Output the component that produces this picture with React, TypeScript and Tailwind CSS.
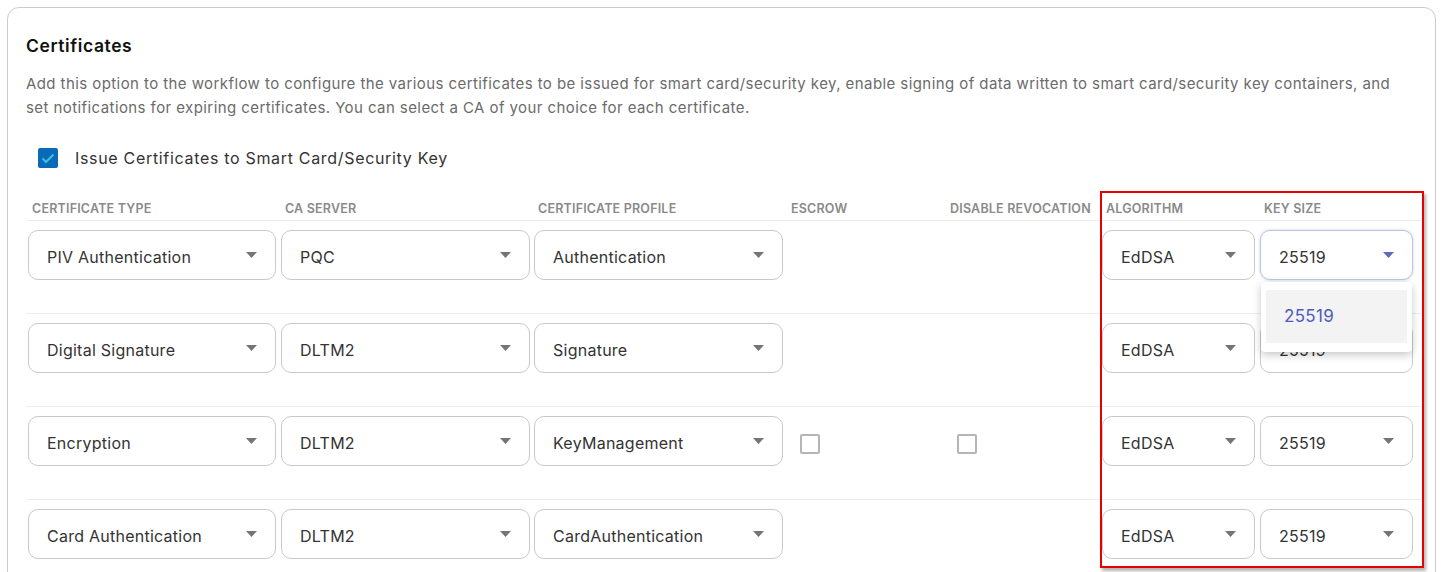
import React from 'react';

type Row = {
  type: string;
  server: string;
  profile: string;
  showChecks?: boolean;
};

const rows: Row[] = [
  { type: 'PIV Authentication', server: 'PQC', profile: 'Authentication' },
  { type: 'Digital Signature', server: 'DLTM2', profile: 'Signature' },
  { type: 'Encryption', server: 'DLTM2', profile: 'KeyManagement', showChecks: true },
  { type: 'Card Authentication', server: 'DLTM2', profile: 'CardAuthentication' },
];

const headers = [
  'Certificate Type',
  'CA Server',
  'Certificate Profile',
  'Escrow',
  'Disable Revocation',
  'Algorithm',
  'Key Size',
];

const gridCols = 'grid grid-cols-[253px_253px_253px_159px_156px_158px_165px]';

const Caret = ({ active }: { active?: boolean }) => (
  <svg width="11" height="6" viewBox="0 0 11 6" className="shrink-0">
    <path d="M0 0 L11 0 L5.5 6 Z" fill={active ? '#5c6bc0' : '#757575'} />
  </svg>
);

const Select = ({ value, width, active }: { value: string; width: string; active?: boolean }) => (
  <div
    className={`${width} h-[50px] rounded-[10px] border bg-white flex items-center justify-between pl-[18px] pr-[18px] ${
      active ? 'border-[#b9c7e6] shadow-[0_0_3px_rgba(92,107,192,0.35)]' : 'border-[#c9c9c9]'
    }`}
  >
    <span className="text-[16px] text-[#333] tracking-[0.25px] pt-[3px]">{value}</span>
    <Caret active={active} />
  </div>
);

const EmptyBox = () => <div className="w-[20px] h-[20px] rounded-[2px] border-2 border-[#b5b5b5] bg-white" />;

const App = () => {
  return (
    <div className="relative w-[1445px] h-[572px] overflow-hidden bg-white font-['Inter','Liberation_Sans',sans-serif]">
      <div className="absolute left-[7px] top-[7px] w-[1429px] h-[600px] rounded-[12px] border border-[#cbcbcb] pl-[18px] pr-[11px] pt-[26px]">
        {/* Title */}
        <h2 className="text-[17.5px] leading-[24px] font-semibold text-[#111] tracking-[0.6px]">Certificates</h2>
        <p className="mt-[14px] pr-[15px] text-[15px] leading-[24px] text-[#6b6b6b] tracking-[0.42px]">
          Add this option to the workflow to configure the various certificates to be issued for smart card/security key, enable signing of data written to smart card/security key containers, and set notifications for expiring certificates. You can select a CA of your choice for each certificate.
        </p>

        {/* Checkbox */}
        <div className="mt-[26px] h-[24px] flex items-center pl-[12px]">
          <div className="w-[20px] h-[20px] rounded-[2px] bg-[#0b6ab8] flex items-center justify-center">
            <svg width="14" height="11" viewBox="0 0 14 11">
              <path d="M1.5 5.5 L5 9 L12.5 1.5" fill="none" stroke="#38c3dc" strokeWidth="2" />
            </svg>
          </div>
          <span className="ml-[17px] text-[16px] text-[#333] tracking-[0.68px]">Issue Certificates to Smart Card/Security Key</span>
        </div>

        {/* Table */}
        <div className="mt-[26px]">
          <div className={`${gridCols} h-[25px] border-b border-[#ececec] items-center`}>
            {headers.map((h) => (
              <div key={h} className="pl-[6px] pt-[2px] text-[12.5px] font-semibold uppercase text-[#8a8a8a] whitespace-nowrap tracking-[0.2px]">
                {h}
              </div>
            ))}
          </div>

          {rows.map((r, i) => (
            <div key={r.type} className={`${gridCols} pt-[9px] pb-[33px] border-b border-[#ececec]`}>
              <div className="pl-[2px]">
                <Select value={r.type} width="w-[248px]" />
              </div>
              <div className="pl-[2px]">
                <Select value={r.server} width="w-[249px]" />
              </div>
              <div className="pl-[2px]">
                <Select value={r.profile} width="w-[249px]" />
              </div>
              <div className="pl-[15px] pt-[5px] flex items-center">{r.showChecks && <EmptyBox />}</div>
              <div className="pl-[13px] pt-[5px] flex items-center">{r.showChecks && <EmptyBox />}</div>
              <div className="pl-[2px]">
                <Select value="EdDSA" width="w-[153px]" />
              </div>
              <div className="pl-[2px] relative">
                <Select value="25519" width="w-[153px]" active={i === 0} />
                {i === 0 && (
                  <div className="absolute left-[3px] top-[52px] z-10 w-[151px] h-[70px] bg-white rounded-[4px] shadow-[0_3px_8px_rgba(0,0,0,0.22)] px-[5px] pt-[8px]">
                    <div className="h-[53px] bg-[#f3f3f3] flex items-center pl-[18px] text-[17px] text-[#4c5bbd] tracking-[0.3px]">25519</div>
                  </div>
                )}
              </div>
            </div>
          ))}
        </div>
      </div>

      {/* Annotation */}
      <div className="absolute left-[1100px] top-[191px] w-[324px] h-[377px] border-2 border-[#e60000] shadow-[2px_3px_3px_rgba(0,0,0,0.3)] z-20 pointer-events-none" />
    </div>
  );
};

export default App;
